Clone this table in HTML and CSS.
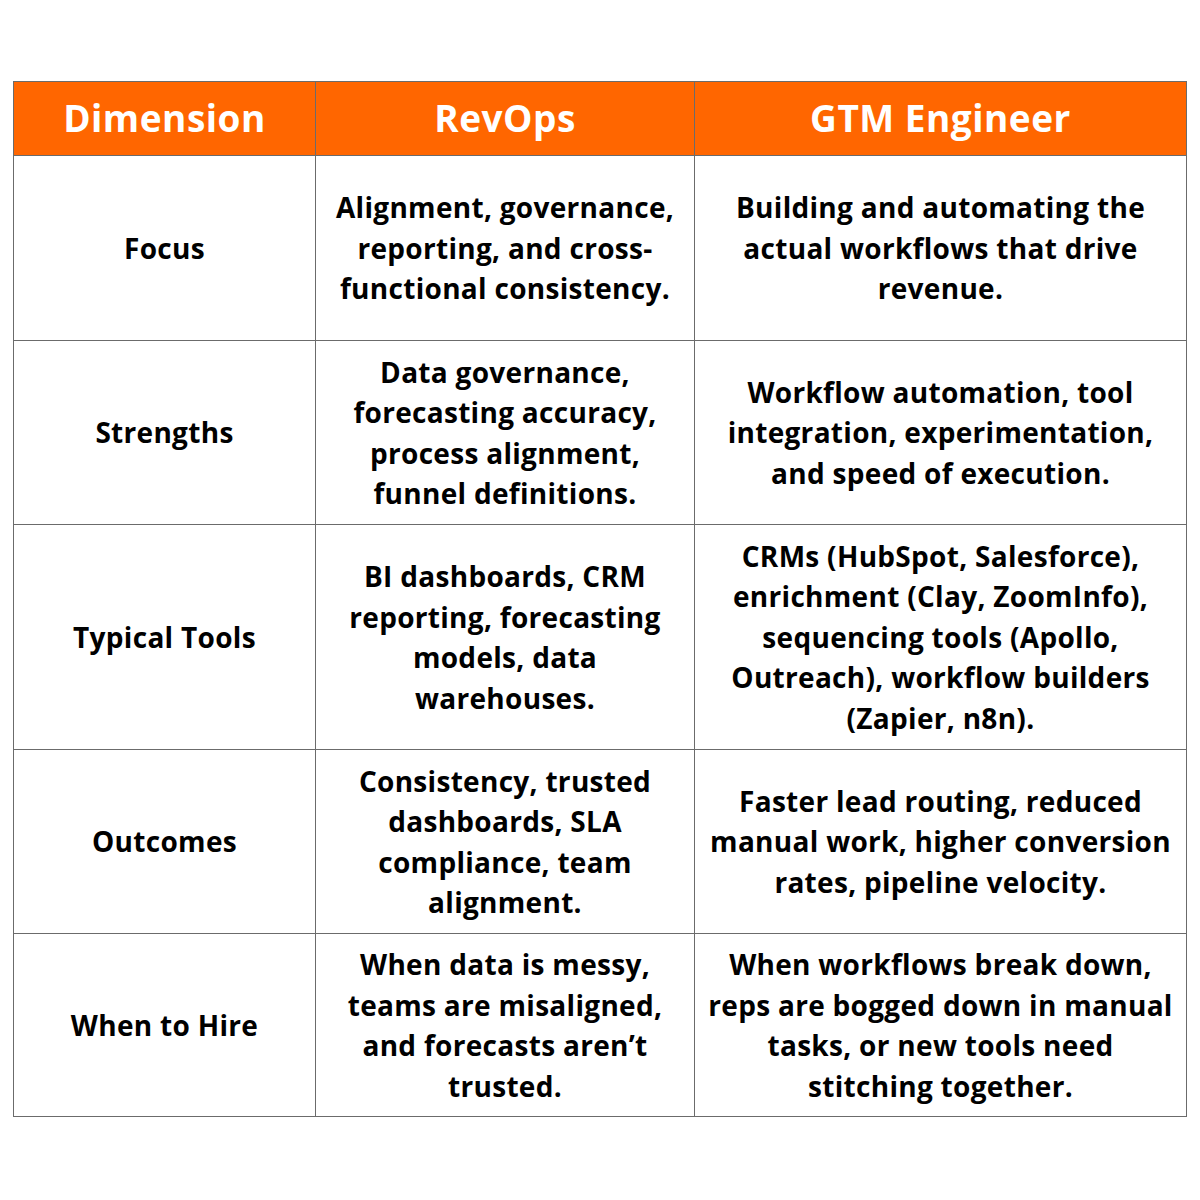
FILE: index.html
```html
<!DOCTYPE html>
<html>
<head>
<meta charset="utf-8">
<link rel="stylesheet" href="styles.css">
</head>
<body>
<div class="page">
<table class="cmp">
  <colgroup><col class="c1"><col class="c2"><col class="c3"></colgroup>
  <thead>
    <tr class="head"><th>Dimension</th><th>RevOps</th><th>GTM Engineer</th></tr>
  </thead>
  <tbody>
    <tr class="r1"><td>Focus</td><td>Alignment, governance,<br>reporting, and cross-<br>functional consistency.</td><td>Building and automating the<br>actual workflows that drive<br>revenue.</td></tr>
    <tr class="r2"><td>Strengths</td><td>Data governance,<br>forecasting accuracy,<br>process alignment,<br>funnel definitions.</td><td>Workflow automation, tool<br>integration, experimentation,<br>and speed of execution.</td></tr>
    <tr class="r3"><td>Typical Tools</td><td>BI dashboards, CRM<br>reporting, forecasting<br>models, data<br>warehouses.</td><td>CRMs (HubSpot, Salesforce),<br>enrichment (Clay, ZoomInfo),<br>sequencing tools (Apollo,<br>Outreach), workflow builders<br>(Zapier, n8n).</td></tr>
    <tr class="r4"><td>Outcomes</td><td>Consistency, trusted<br>dashboards, SLA<br>compliance, team<br>alignment.</td><td>Faster lead routing, reduced<br>manual work, higher conversion<br>rates, pipeline velocity.</td></tr>
    <tr class="r5"><td>When to Hire</td><td>When data is messy,<br>teams are misaligned,<br>and forecasts aren’t<br>trusted.</td><td>When workflows break down,<br>reps are bogged down in manual<br>tasks, or new tools need<br>stitching together.</td></tr>
  </tbody>
</table>
</div>
</body>
</html>
```
FILE: styles.css
```css
html, body {
  margin: 0;
  padding: 0;
  background: #ffffff;
}
.page {
  padding: 81px 0 0 13px;
}
.cmp {
  border-collapse: collapse;
  table-layout: fixed;
  width: 1173px;
  font-family: "Open Sans", "Noto Sans", sans-serif;
  font-weight: 700;
  color: #000000;
}
.c1 { width: 302px; }
.c2 { width: 379px; }
.c3 { width: 492px; }
.cmp th, .cmp td {
  border: 1px solid #6b6b6b;
  text-align: center;
  vertical-align: middle;
  padding: 0;
  white-space: nowrap;
}
.cmp th {
  background: #ff6600;
  color: #ffffff;
  font-size: 37px;
  font-weight: 700;
  height: 70px;
  padding-bottom: 3px;
  letter-spacing: 0.5px;
}
.cmp td {
  font-size: 28px;
  line-height: 40.5px;
  letter-spacing: 0.3px;
}
.r1 td { height: 184px; }
.r2 td, .r4 td { height: 183px; }
.r5 td { height: 182px; }
.r3 td { height: 224px; }
```
